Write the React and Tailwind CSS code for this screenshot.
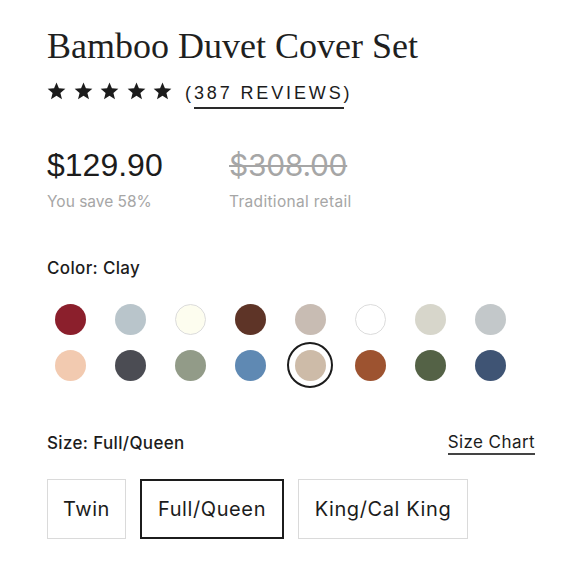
import React from "react";

const row1 = [
  { c: "#8b1f2c" },
  { c: "#b9c5cb" },
  { c: "#fdfdef", b: true },
  { c: "#5e3427" },
  { c: "#c8bcb3" },
  { c: "#ffffff", b: true },
  { c: "#d7d6cb" },
  { c: "#c3c8ca" },
];
const row2 = [
  { c: "#f2cab0" },
  { c: "#4b4c53" },
  { c: "#929b88" },
  { c: "#5f89b3" },
  { c: "#cdbba8", sel: true },
  { c: "#9d5330" },
  { c: "#546246" },
  { c: "#3f5474" },
];

function Star() {
  return (
    <svg width="19" height="18" viewBox="0 0 24 23" className="shrink-0">
      <path
        d="M12 0.5l3.1 7.6 8.2 0.6-6.3 5.3 2 8-7-4.4-7 4.4 2-8L0.7 8.7l8.2-0.6z"
        fill="#1c1c1c"
      />
    </svg>
  );
}

function Swatch({ c, b, sel }) {
  return (
    <div className="w-[60px] h-[46px] flex items-center justify-center">
      <div
        className={
          sel
            ? "w-[46px] h-[46px] rounded-full border-2 border-[#1c1c1c] flex items-center justify-center"
            : "w-[46px] h-[46px] flex items-center justify-center"
        }
      >
        <div
          className={
            b
              ? "w-[31px] h-[31px] rounded-full border border-[#dcdcdc]"
              : "w-[31px] h-[31px] rounded-full"
          }
          style={{ backgroundColor: c }}
        />
      </div>
    </div>
  );
}

export default function App() {
  return (
    <div className="w-[580px] h-[580px] bg-white text-[#1c1c1c] pl-[47px] pr-[45px] pt-[26px] font-['Inter',sans-serif]">
      <h1 className="font-['Liberation_Serif',serif] text-[36px] leading-[40px] text-[#1f1f1f]">
        Bamboo Duvet Cover Set
      </h1>
      <div className="flex items-center mt-[13px] h-[24px]">
        <div className="flex items-center gap-[7.5px]">
          <Star />
          <Star />
          <Star />
          <Star />
          <Star />
        </div>
        <div className="ml-[13px] mt-[3px] font-['Liberation_Sans',sans-serif] text-[18px] tracking-[0.16em] leading-[24px] text-[#1c1c1c]">
          (<span className="border-b-2 border-[#2a2a2a] pb-[4px]">387 REVIEWS</span>)
        </div>
      </div>

      <div className="flex mt-[44px]">
        <div className="w-[182px]">
          <div className="font-['Liberation_Sans',sans-serif] font-light text-[32px] leading-[36px] text-[#1c1c1c]">
            $129.90
          </div>
          <div className="mt-[9px] text-[15.5px] leading-[20px] text-[#a6a6a6]">
            You save 58%
          </div>
        </div>
        <div>
          <div className="text-[30px] leading-[36px] text-[#a6a6a6] line-through decoration-[2px] tracking-[-0.01em]">
            $308.00
          </div>
          <div className="mt-[9px] text-[15.5px] leading-[20px] text-[#a6a6a6] tracking-[0.02em]">
            Traditional retail
          </div>
        </div>
      </div>

      <div className="mt-[45px] text-[17px] leading-[22px] font-medium tracking-[0.02em]">
        Color: Clay
      </div>
      <div className="-ml-[7px] mt-[17px] flex flex-col">
        <div className="flex">
          {row1.map((s, i) => (
            <Swatch key={i} {...s} />
          ))}
        </div>
        <div className="flex">
          {row2.map((s, i) => (
            <Swatch key={i} {...s} />
          ))}
        </div>
      </div>

      <div className="mt-[43px] flex items-center justify-between">
        <div className="text-[17px] leading-[22px] font-medium tracking-[0.02em]">
          Size: Full/Queen
        </div>
        <div className="text-[17px] leading-[22px] tracking-[0.025em] border-b-2 border-[#444]">
          Size Chart
        </div>
      </div>

      <div className="mt-[24px] flex gap-[14px] text-[20px] tracking-[0.03em]">
        <div className="w-[79px] h-[60px] border-[1.5px] border-[#dadada] flex items-center justify-center">
          Twin
        </div>
        <div className="w-[144px] h-[60px] border-2 border-[#1c1c1c] flex items-center justify-center">
          Full/Queen
        </div>
        <div className="w-[170px] h-[60px] border-[1.5px] border-[#dadada] flex items-center justify-center">
          King/Cal King
        </div>
      </div>
    </div>
  );
}
